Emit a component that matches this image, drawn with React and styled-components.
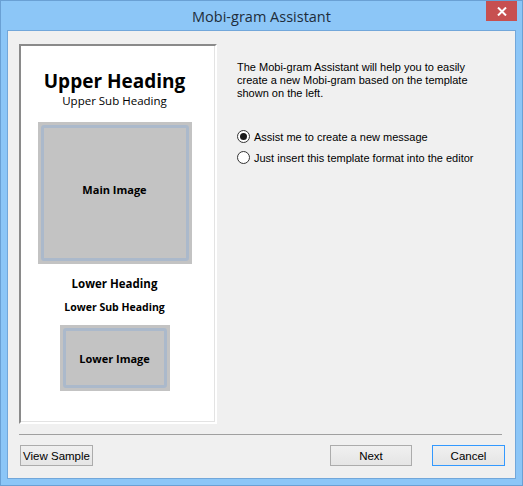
import React from "react";
import styled, { createGlobalStyle } from "styled-components";

const Global = createGlobalStyle`
  html, body { margin: 0; padding: 0; background: #ffffff; }
  * { box-sizing: border-box; }
`;

const Window = styled.div`
  width: 523px;
  height: 486px;
  border: 1px solid #6aa0d4;
  background: #8cc6f7;
  display: flex;
  flex-direction: column;
  padding: 0 6px 6px;
`;

const TitleBar = styled.div`
  height: 29px;
  display: grid;
  grid-template-columns: 1fr auto 1fr;
  align-items: center;
`;

const Title = styled.div`
  grid-column: 2;
  font-family: "Open Sans", "Noto Sans", sans-serif;
  font-size: 14.5px;
  color: #1e2d3b;
  padding-top: 1px;
`;

const CloseButton = styled.div`
  grid-column: 3;
  justify-self: end;
  align-self: start;
  width: 31px;
  height: 20px;
  margin-right: -1px;
  background: #c75050;
  display: flex;
  align-items: center;
  justify-content: center;
`;

const Client = styled.div`
  flex: 1;
  border: 1px solid #72a7da;
  background: #f0f0f0;
  display: flex;
  flex-direction: column;
  padding: 13px 10px 11px 11px;
`;

const MainRow = styled.div`
  display: flex;
  gap: 20px;
  height: 380px;
`;

const Preview = styled.div`
  width: 198px;
  height: 380px;
  background: #ffffff;
  border: 2px solid;
  border-color: #8a8a8a #ffffff #ffffff #8a8a8a;
  box-shadow: inset -1px -1px 0 #e3e3e3;
  display: flex;
  flex-direction: column;
  align-items: center;
  padding: 0 7px 0 0;
  font-family: "Open Sans", "Noto Sans", sans-serif;
  color: #000;
`;

const UpperHeading = styled.div`
  font-size: 19px;
  font-weight: 700;
  line-height: 22px;
  margin-top: 24px;
`;

const UpperSub = styled.div`
  font-size: 11.5px;
  font-weight: 400;
  line-height: 14px;
  margin-top: 2px;
`;

const ImageBox = styled.div`
  width: ${(p) => p.$w}px;
  height: ${(p) => p.$h}px;
  margin-top: ${(p) => p.$mt}px;
  background: #c3c3c3;
  padding: 3px;
  display: flex;
`;

const ImageFrame = styled.div`
  flex: 1;
  border: 3px solid #abb9cb;
  border-radius: 3px;
  display: flex;
  align-items: center;
  justify-content: center;
  padding-bottom: ${(p) => p.$pb || 0}px;
  font-size: 11px;
  font-weight: 700;
`;

const LowerHeading = styled.div`
  font-size: ${(p) => p.$fs}px;
  font-weight: 700;
  line-height: 14px;
  margin-top: ${(p) => p.$mt}px;
`;

const RightPane = styled.div`
  flex: 1;
  padding-top: 17px;
  font-family: "Liberation Sans", Arial, sans-serif;
  font-size: 11px;
  color: #000;
`;

const Intro = styled.p`
  margin: 0;
  line-height: 13px;
  width: 250px;
`;

const RadioGroup = styled.div`
  margin-top: 26px;
  display: flex;
  flex-direction: column;
`;

const RadioRow = styled.label`
  display: flex;
  align-items: center;
  height: 21px;
  gap: 4px;
`;

const RadioCircle = styled.span`
  width: 13px;
  height: 13px;
  border-radius: 50%;
  border: 1px solid #333333;
  background: #ffffff;
  display: flex;
  align-items: center;
  justify-content: center;
  &::after {
    content: "";
    width: 7px;
    height: 7px;
    border-radius: 50%;
    background: ${(p) => (p.$checked ? "#1a1a1a" : "transparent")};
  }
`;

const Separator = styled.div`
  height: 1px;
  background: #a0a0a0;
  margin: 10px 3px 0 0;
`;

const ButtonRow = styled.div`
  margin-top: 10px;
  display: flex;
  align-items: center;
  gap: 20px;
`;

const Spacer = styled.div`
  flex: 1;
`;

const Button = styled.button`
  width: ${(p) => p.$w}px;
  height: 21px;
  margin-left: ${(p) => p.$ml || 0}px;
  border: 1px solid ${(p) => (p.$focused ? "#3399ff" : "#acacac")};
  background: linear-gradient(#f0f0f0, #e5e5e5);
  font-family: "Liberation Sans", Arial, sans-serif;
  font-size: 11.5px;
  color: #000;
  padding: 0;
  display: flex;
  align-items: center;
  justify-content: center;
`;

export default function App() {
  return (
    <>
      <Global />
      <Window>
        <TitleBar>
          <Title>Mobi-gram Assistant</Title>
          <CloseButton>
            <svg width="10" height="9" viewBox="0 0 10 9">
              <path d="M1 0.5 L9 8.5 M9 0.5 L1 8.5" stroke="#ffffff" strokeWidth="2" />
            </svg>
          </CloseButton>
        </TitleBar>
        <Client>
          <MainRow>
            <Preview>
              <UpperHeading>Upper Heading</UpperHeading>
              <UpperSub>Upper Sub Heading</UpperSub>
              <ImageBox $w={154} $h={142} $mt={14}>
                <ImageFrame $pb={8}>Main Image</ImageFrame>
              </ImageBox>
              <LowerHeading $fs={11.5} $mt={13}>Lower Heading</LowerHeading>
              <LowerHeading $fs={10.5} $mt={9}>Lower Sub Heading</LowerHeading>
              <ImageBox $w={110} $h={66} $mt={11}>
                <ImageFrame>Lower Image</ImageFrame>
              </ImageBox>
            </Preview>
            <RightPane>
              <Intro>
                The Mobi-gram Assistant will help you to easily create a new
                Mobi-gram based on the template shown on the left.
              </Intro>
              <RadioGroup>
                <RadioRow>
                  <RadioCircle $checked />
                  Assist me to create a new message
                </RadioRow>
                <RadioRow>
                  <RadioCircle />
                  Just insert this template format into the editor
                </RadioRow>
              </RadioGroup>
            </RightPane>
          </MainRow>
          <Separator />
          <ButtonRow>
            <Button $w={73} $ml={1}>View Sample</Button>
            <Spacer />
            <Button $w={82}>Next</Button>
            <Button $w={73} $focused>Cancel</Button>
          </ButtonRow>
        </Client>
      </Window>
    </>
  );
}
